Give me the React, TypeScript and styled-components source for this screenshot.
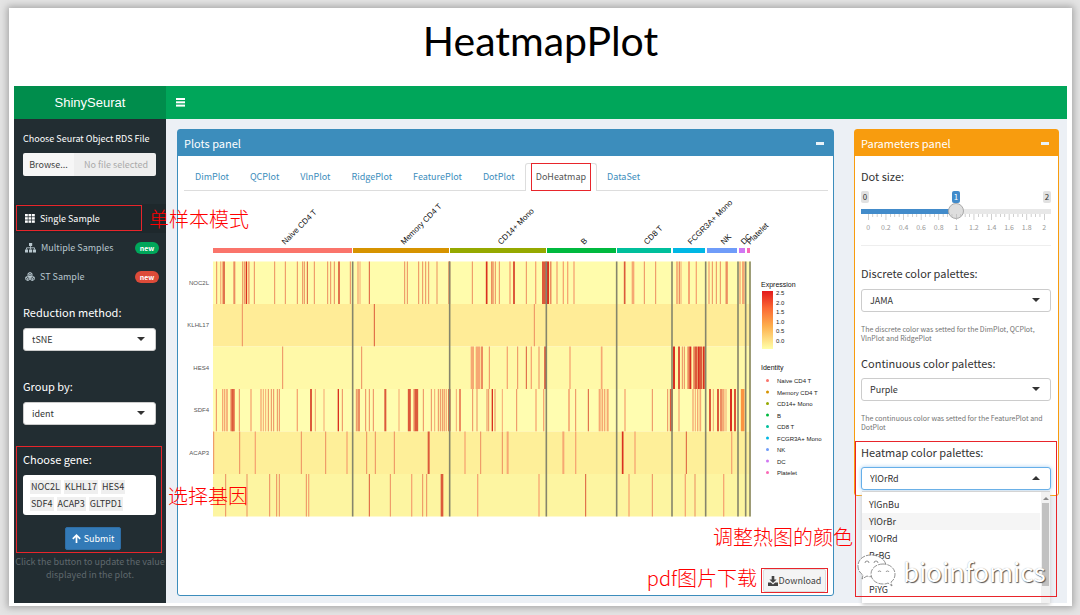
import React, { useState } from "react";
import styled, { createGlobalStyle, css } from "styled-components";

const uiFont = '"Noto Sans CJK SC", "Noto Sans", sans-serif';
const plotFont = '"Liberation Sans", Arial, sans-serif';

const GlobalStyle = createGlobalStyle`
  * { box-sizing: border-box; }
  body {
    margin: 0;
    background: #e4e4e4;
    font-family: ${uiFont};
    color: #333;
  }
  button, input, select { font-family: inherit; }
`;

const Slide = styled.main`
  margin: 8px 8px 9px 9px;
  padding: 0 5px 3px;
  background: #fff;
  box-shadow: 0 0 7px 2px #a8a8a8;
`;

const SlideTitle = styled.h1`
  margin: 0;
  height: 78px;
  padding-top: 4px;
  font: 400 41px/58px Lato, sans-serif;
  text-align: center;
  color: #000;
`;

const Shell = styled.div`
  display: grid;
  grid-template-columns: 152px minmax(0, 1fr);
  grid-template-rows: 33px auto;
`;

const Brand = styled.div`
  background: #008d4c;
  color: #fff;
  font: 400 13px/33px ${plotFont};
  text-align: center;
`;

const Navbar = styled.header`
  display: flex;
  align-items: center;
  padding-left: 10px;
  background: #00a65a;
`;

const MenuButton = styled.button`
  display: flex;
  padding: 0;
  border: 0;
  background: none;
  color: #fff;
`;

const Sidebar = styled.aside`
  position: relative;
  z-index: 2;
  padding: 10px 0 0;
  background: #222d32;
  color: #fff;
`;

const Field = styled.div<{ $space?: number }>`
  position: relative;
  padding: 0 10px 0 9px;
  margin-top: ${(p) => p.$space ?? 0}px;
`;

const Label = styled.label<{ $small?: boolean }>`
  display: block;
  font-size: ${(p) => (p.$small ? 9 : 11)}px;
  line-height: 20px;
  white-space: nowrap;
`;

const FileRow = styled.div`
  display: flex;
  height: 23px;
  margin-top: 4px;
  border-radius: 2px;
  overflow: hidden;
`;

const BrowseLabel = styled.label`
  width: 51px;
  background: #f6f6f6;
  color: #444;
  font-size: 9px;
  line-height: 23px;
  text-align: center;
`;

const HiddenFile = styled.input`
  position: absolute;
  width: 1px;
  height: 1px;
  opacity: 0;
`;

const FileName = styled.input`
  flex: 1;
  min-width: 0;
  padding: 0 0 0 10px;
  border: 0;
  background: #eee;
  font-size: 9px;
  &::placeholder { color: #aaa; }
`;

const Menu = styled.nav`
  margin-top: 28px;
`;

const MenuItem = styled.a<{ $active?: boolean }>`
  position: relative;
  display: flex;
  align-items: center;
  gap: 5px;
  height: 29px;
  padding: 0 7px 0 11px;
  background: ${(p) => (p.$active ? "#1e282c" : "transparent")};
  color: ${(p) => (p.$active ? "#fff" : "#b8c7ce")};
  font-size: 9px;
  text-decoration: none;
  white-space: nowrap;
`;

const NewBadge = styled.span<{ $color: string }>`
  margin-left: auto;
  width: 24px;
  border-radius: 6px;
  background: ${(p) => p.$color};
  color: #fff;
  font-size: 7px;
  font-weight: 700;
  line-height: 12px;
  text-align: center;
`;

const Mark = styled.span<{ $inset: string }>`
  position: absolute;
  inset: ${(p) => p.$inset};
  border: 1px solid #e8252b;
  pointer-events: none;
  z-index: 4;
`;

const Note = styled.span`
  position: absolute;
  z-index: 5;
  color: #f00;
  font-size: 20px;
  font-weight: 300;
  line-height: 24px;
  white-space: nowrap;
`;

const SideNote = styled(Note)`
  left: 135px;
  top: 3px;
`;

const GeneNote = styled(Note)`
  left: 154px;
  top: 35px;
`;

const SelectWrap = styled.div<{ $tight?: boolean }>`
  position: relative;
  margin-top: ${(p) => (p.$tight ? 5 : 6)}px;
  color: #333;
`;

const Select = styled.select<{ $open?: boolean }>`
  display: block;
  width: 100%;
  height: 23px;
  padding: 0 20px 0 8px;
  border: 1px solid #ccc;
  border-radius: 3px;
  appearance: none;
  background: #fff;
  color: #333;
  font-size: 9px;
  ${(p) =>
    p.$open &&
    css`
      border-color: #66afe9;
      box-shadow: 0 0 4px #a5cff2;
    `}
`;

const Caret = styled.span<{ $up?: boolean }>`
  position: absolute;
  right: 11px;
  top: 9px;
  border: 4px solid transparent;
  border-top-color: ${(p) => (p.$up ? "transparent" : "#333")};
  border-bottom-color: ${(p) => (p.$up ? "#333" : "transparent")};
  border-top-width: ${(p) => (p.$up ? 0 : 4)}px;
  border-bottom-width: ${(p) => (p.$up ? 4 : 0)}px;
  pointer-events: none;
`;

const GeneBox = styled.div`
  display: flex;
  flex-wrap: wrap;
  align-content: center;
  gap: 3px;
  height: 40px;
  margin-top: 6px;
  padding: 0 7px;
  border-radius: 3px;
  background: #fff;
`;

const Gene = styled.span`
  padding: 0 1px;
  background: #efefef;
  color: #333;
  font-size: 9px;
  line-height: 14px;
`;

const SubmitButton = styled.button`
  display: flex;
  align-items: center;
  justify-content: center;
  gap: 3px;
  width: 56px;
  height: 23px;
  margin: 12px auto 0 42px;
  padding: 0;
  border: 1px solid #2e6da4;
  border-radius: 2px;
  background: #337ab7;
  color: #fff;
  font-size: 9px;
`;

const SideHelp = styled.p`
  margin: 5px 0 0;
  color: #5f686d;
  font-size: 9px;
  line-height: 13px;
  text-align: center;
`;

const Content = styled.section`
  display: grid;
  grid-template-columns: minmax(0, 657fr) minmax(0, 205fr);
  gap: 20px;
  align-items: start;
  padding: 10px 8px 7px 11px;
  background: #ecf0f5;
`;

const Panel = styled.section<{ $color: string }>`
  position: relative;
  border: 1px solid ${(p) => p.$color};
  border-radius: 3px;
  background: #fff;
`;

const PanelHead = styled.header<{ $color: string }>`
  display: flex;
  align-items: center;
  justify-content: space-between;
  height: 26px;
  padding: 0 9px 0 6px;
  background: ${(p) => p.$color};
  color: #fff;
`;

const PanelTitle = styled.h2`
  margin: 0;
  font-size: 11px;
  font-weight: 400;
  line-height: 24px;
`;

const CollapseButton = styled.button`
  width: 8px;
  height: 3px;
  padding: 0;
  border: 0;
  background: #e8f2f8;
`;

const Tabs = styled.nav`
  display: flex;
  height: 35px;
  margin: 0 5px 0 6px;
  padding-top: 7px;
  border-bottom: 1px solid #ddd;
`;

const Tab = styled.a<{ $active?: boolean }>`
  position: relative;
  height: 28px;
  margin-right: -1px;
  padding: 0 10px;
  border: 1px solid ${(p) => (p.$active ? "#ddd" : "transparent")};
  border-bottom: 0;
  border-radius: 3px 3px 0 0;
  background: ${(p) => (p.$active ? "#fff" : "none")};
  color: ${(p) => (p.$active ? "#555" : "#3c8dbc")};
  font-size: 9px;
  line-height: 26px;
  text-decoration: none;
`;

const Chart = styled.svg`
  display: block;
  width: 100%;
  height: auto;
  font-family: ${plotFont};
`;

const PanelFoot = styled.footer`
  position: relative;
  display: flex;
  justify-content: flex-end;
  padding: 5px 5px 2px 0;
`;

const DownloadSlot = styled.div`
  position: relative;
  padding: 1px 2px;
`;

const DownloadButton = styled.button`
  display: flex;
  align-items: center;
  justify-content: center;
  gap: 1px;
  width: 63px;
  height: 23px;
  padding: 0;
  border: 1px solid #ddd;
  border-radius: 2px;
  background: #f4f4f4;
  color: #444;
  font-size: 9px;
`;

const DownloadNote = styled(Note)`
  right: 76px;
  top: 3px;
`;

const ColorNote = styled(Note)`
  right: -20px;
  top: -38px;
`;

const ParamBody = styled.div`
  padding: 10px 7px 5px 6px;
`;

const SliderTop = styled.div`
  display: flex;
  justify-content: space-between;
  margin-top: 5px;
`;

const SliderTag = styled.output<{ $on?: boolean }>`
  width: 8px;
  border-radius: 2px;
  background: ${(p) => (p.$on ? "#428bca" : "#e1e1e1")};
  color: ${(p) => (p.$on ? "#fff" : "#333")};
  font-size: 8px;
  line-height: 12px;
  text-align: center;
`;

const Range = styled.input`
  display: block;
  width: 100%;
  height: 16px;
  margin: 0;
  appearance: none;
  background: linear-gradient(90deg, #428bca 50%, #e8e8e8 50%) center / 100% 5px no-repeat;
  &::-webkit-slider-thumb {
    appearance: none;
    width: 16px;
    height: 16px;
    border: 1px solid #aaa;
    border-radius: 50%;
    background: #dedede;
  }
`;

const Scale = styled.svg`
  display: block;
  width: 100%;
  height: auto;
  margin-top: -5px;
  font-family: ${uiFont};
`;

const Rule = styled.hr`
  height: 1px;
  margin: 11px 0 17px;
  border: 0;
  background: #eee;
`;

const ParamHelp = styled.p`
  margin: 13px 0 0;
  min-height: 18px;
  color: #737373;
  font-size: 7px;
  line-height: 9px;
`;

const ParamLabel = styled(Label)<{ $gap?: number }>`
  margin-top: ${(p) => p.$gap ?? 0}px;
`;

const HeatmapField = styled.div`
  position: relative;
  margin-top: 10px;
`;

const Options = styled.ul`
  position: absolute;
  top: 49px;
  left: 1px;
  right: 1px;
  height: 112px;
  margin: 0;
  padding: 4px 10px 0 0;
  overflow: hidden;
  background: #fff;
  border: solid #d4d4d4;
  border-width: 1px 0 0;
  box-shadow: 0 2px 4px #ccc;
  list-style: none;
`;

const Option = styled.li<{ $hover?: boolean }>`
  height: 17px;
  padding-left: 7px;
  background: ${(p) => (p.$hover ? "#f5f5f5" : "#fff")};
  color: #333;
  font-size: 9px;
  line-height: 17px;
`;

const ScrollTrack = styled.li`
  position: absolute;
  top: 0;
  right: 0;
  width: 9px;
  height: 112px;
  padding: 11px 1px 0;
  background: #f1f1f1;
  &::before {
    content: "";
    position: absolute;
    top: 5px;
    left: 2px;
    border: 3px solid transparent;
    border-top-width: 0;
    border-bottom-color: #888;
  }
  &::after {
    content: "";
    display: block;
    height: 83px;
    background: #c1c1c1;
  }
`;

const Watermark = styled.div`
  position: absolute;
  z-index: 6;
  left: 2px;
  bottom: -94px;
  display: flex;
  align-items: center;
  gap: 7px;
  color: #fff;
  font-size: 26px;
  line-height: 36px;
  text-shadow: 1px 1px 1px #555, 0 0 1px #aaa;
`;

/* Cell positions are thirds of a plot unit, counted from PLOT_ORIGIN. */
const PLOT_ORIGIN = 180;
type Cell = [x: number, width?: number, tone?: number];
const tones = ["#f6a873", "#ec8d60", "#dc5a3b", "#d9301f", "#fb9441"];

const rows: { gene: string; fill: string; cells: Cell[] }[] = [
  {
    gene: "NOC2L",
    fill: "#fffcac",
    cells: [
      [110, 3], [122, 3, 0], [127, 3, 0], [132, 5, 2], [163, 6, 1], [188], [193], [199, 4, 3], [206, 6, 0], [223],
      [284], [316], [352], [368], [373], [382, 3, 2], [403], [443], [452], [463], [477, 5, 2], [511], [534, 4, 0],
      [540, 3, 0], [568, 3, 2], [674], [682], [716], [728], [737], [746], [771], [808, 5, 2], [877], [920, 5, 3],
      [935, 4, 1], [939, 4, 1], [946], [958], [990, 4, 0], [1002, 6, 2], [1039], [1067, 4, 0], [1093, 14, 2],
      [1104, 6, 3], [1112, 5, 1], [1131, 4, 0], [1150, 4, 0], [1163, 4, 0], [1182, 4, 0], [1334, 5, 2],
      [1359, 8, 0], [1393], [1427], [1491, 5, 0], [1498, 4, 1], [1503, 3, 0], [1527, 6, 0], [1549, 4, 0],
      [1587, 4, 0], [1597], [1609], [1621], [1640, 7, 1], [1680, 4, 0], [1690, 8, 0],
    ],
  },
  { gene: "KLHL17", fill: "#ffec97", cells: [[187], [583, 3, 2], [1063]] },
  {
    gene: "HES4",
    fill: "#fff9a8",
    cells: [
      [308], [545], [877, 10, 0], [894, 14, 0], [906, 6, 1], [928], [982, 4, 0], [1013], [1039, 3, 2], [1054, 4, 0],
      [1077], [1096, 7, 2], [1170, 4, 0], [1265, 5, 0], [1482, 6, 3], [1497, 5, 3], [1507], [1513], [1525, 6, 1],
      [1531, 6, 3], [1541], [1547, 8, 2], [1556, 7, 3], [1563, 6, 2], [1571, 6, 3], [1576, 4, 2],
    ],
  },
  {
    gene: "SDF4",
    fill: "#fffdb0",
    cells: [
      [109], [128, 4, 0], [134, 4, 0], [141, 5, 0], [158, 14, 1], [158, 6, 2], [178], [213, 4, 0], [243, 4, 0],
      [250, 3, 0], [257, 3, 0], [265], [274], [281], [292], [298], [352, 4, 0], [393, 6, 2], [406, 3, 0],
      [432, 3, 0], [475, 4, 3], [487], [529], [536, 8, 1], [557], [568], [580], [616, 6, 2], [657, 3, 0],
      [688, 9, 2], [702, 5, 0], [709, 11, 2], [730], [754], [764, 3, 0], [775], [781], [787], [793, 5, 0],
      [799, 3, 0], [808, 7, 2], [829, 3, 0], [840, 6, 1], [878], [891], [921], [926], [937, 4, 3],
      [945], [967, 3, 0], [1010], [1068, 4, 0], [1091, 4, 0], [1167, 5, 0], [1187], [1225, 3, 2], [1259, 6, 0],
      [1267, 5, 0], [1274, 4, 0], [1283, 6, 0], [1335, 4, 0], [1417], [1463], [1474, 9, 2], [1497, 4, 0],
      [1539, 4, 0], [1546, 3, 0], [1553, 4, 0], [1561, 5, 0], [1590, 6, 2], [1600, 3, 0], [1614, 6, 2],
      [1624, 8, 1], [1631, 5, 0], [1638, 3, 0], [1653, 6, 3], [1665, 5, 3], [1688, 11, 4],
    ],
  },
  {
    gene: "ACAP3",
    fill: "#feef99",
    cells: [
      [101], [179], [226, 4, 0], [364], [437], [501, 4, 0], [560], [586], [643], [746, 6, 2], [855, 4, 0],
      [902], [967], [983, 6, 0], [1150, 6, 0], [1187, 4, 0], [1328, 5, 3], [1365, 4, 0], [1519, 3, 2], [1655, 4, 0],
    ],
  },
  {
    gene: "",
    fill: "#fdf5a1",
    cells: [
      [137], [201], [269], [290], [298], [379], [386, 4, 0], [568, 3, 2], [631], [695, 4, 0], [728], [740],
      [786, 8, 2], [893, 4, 0], [1077, 4, 0], [1217, 3, 2], [1347, 4, 0], [1417], [1516, 4, 0], [1545],
      [1631, 4, 0],
    ],
  },
];

const dividers = [518, 809, 1099, 1310, 1476, 1577, 1674, 1697, 1710];

const groups = [
  { name: "Naive CD4 T", color: "#fa746b", from: 213, to: 352, label: 285 },
  { name: "Memory CD4 T", color: "#d69300", from: 353, to: 449, label: 404 },
  { name: "CD14+ Mono", color: "#95a900", from: 450, to: 546, label: 501 },
  { name: "B", color: "#00b93f", from: 547, to: 616, label: 584 },
  { name: "CD8 T", color: "#00bf9c", from: 617, to: 671, label: 647 },
  { name: "FCGR3A+ Mono", color: "#00b7e4", from: 673, to: 705, label: 691 },
  { name: "NK", color: "#6f9cf9", from: 707, to: 737, label: 724 },
  { name: "DC", color: "#d077f2", from: 739, to: 745, label: 744 },
  { name: "Platelet", color: "#fb68b6", from: 747, to: 750, label: 750 },
];

const rowTop = (index: number) => 261.5 + index * 42.5;

const Heatmap = () => (
  <Chart viewBox="178 191 655 372" role="img" aria-label="Expression heatmap by identity">
    <defs>
      <linearGradient id="expression" x1="0" y1="0" x2="0" y2="1">
        <stop offset="0" stopColor="#e31a1c" />
        <stop offset="0.3" stopColor="#fb6a34" />
        <stop offset="0.6" stopColor="#fdae4c" />
        <stop offset="1" stopColor="#ffffa8" />
      </linearGradient>
    </defs>
    {groups.map((g) => (
      <g key={g.name}>
        <rect x={g.from} y={248} width={g.to - g.from} height={5} fill={g.color} />
        <text transform={`translate(${g.label} 245) rotate(-45)`} fontSize={8} fill="#111">
          {g.name}
        </text>
      </g>
    ))}
    {rows.map((row, i) => (
      <g key={i}>
        <rect x={213} y={rowTop(i)} width={538} height={42.5} fill={row.fill} />
        {row.cells.map(([x, width = 3, tone = 1], n) => (
          <rect
            key={n}
            x={PLOT_ORIGIN + (x - width / 2) / 3}
            y={rowTop(i)}
            width={width / 3}
            height={42.5}
            fill={tones[tone]}
          />
        ))}
        <text x={209} y={rowTop(i) + 23} fontSize={6} fill="#555" textAnchor="end">
          {row.gene}
        </text>
      </g>
    ))}
    {dividers.map((x) => (
      <rect key={x} x={PLOT_ORIGIN + x / 3 - 0.8} y={261.5} width={1.6} height={255} fill="#85856c" />
    ))}
    <text x={761} y={287} fontSize={7} fill="#111">Expression</text>
    <rect x={762} y={291} width={11} height={58} fill="url(#expression)" />
    {["2.5", "2.0", "1.5", "1.0", "0.5", "0.0"].map((value, i) => (
      <text key={value} x={776} y={295 + i * 9.6} fontSize={6} fill="#222">{value}</text>
    ))}
    <text x={761} y={370} fontSize={7} fill="#111">Identity</text>
    {groups.map((g, i) => (
      <g key={g.name}>
        <circle cx={767.5} cy={380.5 + i * 11.5} r={1.5} fill={g.color} />
        <text x={777} y={383 + i * 11.5} fontSize={6} fill="#222">{g.name}</text>
      </g>
    ))}
  </Chart>
);

const GridIcon = () => (
  <svg width="10" height="9" viewBox="0 0 10 9" fill="currentColor" aria-hidden="true">
    {[0, 3.5, 7].map((x) => [0, 3.2, 6.4].map((y) => <rect key={`${x}-${y}`} x={x} y={y} width="2.8" height="2.4" />))}
  </svg>
);

const TreeIcon = () => (
  <svg width="11" height="10" viewBox="0 0 11 10" fill="currentColor" aria-hidden="true">
    <rect x="4" y="0" width="3.2" height="3" />
    <rect x="0" y="6.5" width="3" height="3" />
    <rect x="4" y="6.5" width="3.2" height="3" />
    <rect x="8" y="6.5" width="3" height="3" />
    <path d="M1.5 6.5V4.8H9.5V6.5M5.6 3V6.5" fill="none" stroke="currentColor" strokeWidth="0.9" />
  </svg>
);

const CubesIcon = () => (
  <svg width="10" height="9" viewBox="0 0 20 18" fill="none" stroke="currentColor" strokeWidth="2" strokeLinejoin="round" aria-hidden="true">
    <path d="M10 1l4 2v4.500l-4 2-4-2V3zM6 3l4 2 4-2M10 5v4" />
    <path d="M5.500 8.500l4 2V15l-4 2-4-2v-4.500zM1.500 10.500l4 2 4-2M5.500 12.500V17" />
    <path d="M14.500 8.500l4 2V15l-4 2-4-2v-4.500zM10.500 10.500l4 2 4-2M14.500 12.500V17" />
  </svg>
);

const BarsIcon = () => (
  <svg width="9" height="9" viewBox="0 0 9 9" fill="currentColor" aria-hidden="true">
    <rect width="9" height="2" y="0" />
    <rect width="9" height="2" y="3.300" />
    <rect width="9" height="2" y="6.600" />
  </svg>
);

const ArrowUpIcon = () => (
  <svg width="9" height="9" viewBox="0 0 9 9" fill="none" stroke="currentColor" strokeWidth="1.700" aria-hidden="true">
    <path d="M4.500 9V1.200M0.800 4.900L4.500 1.200 8.200 4.900" />
  </svg>
);

const DownloadIcon = () => (
  <svg width="10" height="10" viewBox="0 0 10 10" fill="currentColor" aria-hidden="true">
    <path d="M3.700 0h2.600v3.400h2.300L5 7 1.400 3.400h2.300z" />
    <path d="M0 6.500h2.800L5 8.400l2.200-1.900H10V10H0z" />
  </svg>
);

const ChatIcon = () => (
  <svg width="39" height="34" viewBox="0 0 39 34" fill="#fff" stroke="#777" strokeWidth="0.8" aria-hidden="true">
    <path d="M14 1C6 1 1 6 1 12c0 4 2 7 5 9l-1 4 5-3c2 1 5 1 7 0 8 0 12-5 12-10C29 6 22 1 14 1z" strokeDasharray="5 1" />
    <path d="M26 10c-7 0-12 4.500-12 10s5 10 12 10c2 0 3 0 5-1l4 3-1-4c3-2 4-5 4-8 0-5.500-5-10-12-10z" strokeDasharray="5 1" />
    <g fill="none" stroke="#777">
      <path d="M8 9a2 2 0 0 1 4 0M17 9a2 2 0 0 1 4 0M21 18a1.600 1.600 0 0 1 3 0M29 18a1.600 1.600 0 0 1 3 0" />
    </g>
  </svg>
);

const SliderScale = () => (
  <Scale viewBox="0 0 190 20" aria-hidden="true">
    {Array.from({ length: 41 }, (_, i) => (
      <rect key={i} x={7 + i * 4.4} y={0} width={0.7} height={i % 4 === 0 ? 6 : 3} fill="#bbb" />
    ))}
    {["0", "0.2", "0.4", "0.6", "0.8", "1", "1.2", "1.4", "1.6", "1.8", "2"].map((v, i) => (
      <text key={v} x={7.300 + i * 17.600} y={16} fontSize={7} fill="#999" textAnchor="middle">{v}</text>
    ))}
  </Scale>
);

const tabs = ["DimPlot", "QCPlot", "VlnPlot", "RidgePlot", "FeaturePlot", "DotPlot", "DoHeatmap", "DataSet"];
const genes = ["NOC2L", "KLHL17", "HES4", "SDF4", "ACAP3", "GLTPD1"];
const palettes = ["YlGnBu", "YlOrBr", "YlOrRd", "BrBG", "PRGn", "PiYG"];

const Picker = ({ id, value, open, tight }: { id: string; value: string; open?: boolean; tight?: boolean }) => (
  <SelectWrap $tight={tight}>
    <Select id={id} $open={open} defaultValue={value}>
      <option>{value}</option>
    </Select>
    <Caret $up={open} />
  </SelectWrap>
);

export default function App() {
  const [size, setSize] = useState(1);
  return (
    <>
      <GlobalStyle />
      <Slide>
        <SlideTitle>HeatmapPlot</SlideTitle>
        <Shell>
          <Brand>ShinySeurat</Brand>
          <Navbar>
            <MenuButton aria-label="Toggle navigation"><BarsIcon /></MenuButton>
          </Navbar>
          <Sidebar>
            <Field>
              <Label $small htmlFor="rds-name">Choose Seurat Object RDS File</Label>
              <FileRow>
                <BrowseLabel>Browse...<HiddenFile type="file" /></BrowseLabel>
                <FileName id="rds-name" readOnly placeholder="No file selected" />
              </FileRow>
            </Field>
            <Menu>
              <MenuItem href="#single" $active>
                <GridIcon />Single Sample
                <Mark $inset="1px 24px 2px 2px" />
                <SideNote>单样本模式</SideNote>
              </MenuItem>
              <MenuItem href="#multiple">
                <TreeIcon />Multiple Samples<NewBadge $color="#00a65a">new</NewBadge>
              </MenuItem>
              <MenuItem href="#st">
                <CubesIcon />ST Sample<NewBadge $color="#dd4b39">new</NewBadge>
              </MenuItem>
            </Menu>
            <Field $space={11}>
              <Label htmlFor="reduction">Reduction method:</Label>
              <Picker id="reduction" value="tSNE" />
            </Field>
            <Field $space={25}>
              <Label htmlFor="group">Group by:</Label>
              <Picker id="group" value="ident" />
            </Field>
            <Field $space={24}>
              <Mark $inset="-3px 4px -3px 2px" />
              <GeneNote>选择基因</GeneNote>
              <Label as="div">Choose gene:</Label>
              <GeneBox>
                {genes.map((g) => <Gene key={g}>{g}</Gene>)}
              </GeneBox>
              <SubmitButton><ArrowUpIcon />Submit</SubmitButton>
            </Field>
            <SideHelp>Click the button to update the value displayed in the plot.</SideHelp>
          </Sidebar>
          <Content>
            <Panel $color="#3c8dbc">
              <PanelHead $color="#3c8dbc">
                <PanelTitle>Plots panel</PanelTitle>
                <CollapseButton aria-label="Collapse plots panel" />
              </PanelHead>
              <Tabs>
                {tabs.map((t) => (
                  <Tab key={t} href={`#${t}`} $active={t === "DoHeatmap"}>
                    {t}
                    {t === "DoHeatmap" && <Mark $inset="-1px 5px 0 5px" />}
                  </Tab>
                ))}
              </Tabs>
              <Heatmap />
              <PanelFoot>
                <ColorNote>调整热图的颜色</ColorNote>
                <DownloadNote>pdf图片下载</DownloadNote>
                <DownloadSlot>
                  <DownloadButton><DownloadIcon />Download</DownloadButton>
                  <Mark $inset="0" />
                </DownloadSlot>
              </PanelFoot>
            </Panel>
            <Panel $color="#f89c0e">
              <PanelHead $color="#f89c0e">
                <PanelTitle>Parameters panel</PanelTitle>
                <CollapseButton aria-label="Collapse parameters panel" />
              </PanelHead>
              <ParamBody>
                <Label htmlFor="dot-size">Dot size:</Label>
                <SliderTop>
                  <SliderTag>0</SliderTag>
                  <SliderTag $on>{size}</SliderTag>
                  <SliderTag>2</SliderTag>
                </SliderTop>
                <Range
                  id="dot-size"
                  type="range"
                  min="0"
                  max="2"
                  step="0.1"
                  value={size}
                  onChange={(e) => setSize(Number(e.target.value))}
                />
                <SliderScale />
                <Rule />
                <ParamLabel htmlFor="discrete">Discrete color palettes:</ParamLabel>
                <Picker id="discrete" value="JAMA" />
                <ParamHelp>The discrete color was setted for the DimPlot, QCPlot, VlnPlot and RidgePlot</ParamHelp>
                <ParamLabel $gap={10} htmlFor="continuous">Continuous color palettes:</ParamLabel>
                <Picker id="continuous" value="Purple" tight />
                <ParamHelp>The continuous color was setted for the FeaturePlot and DotPlot</ParamHelp>
                <HeatmapField>
                  <Label htmlFor="heatmap">Heatmap color palettes:</Label>
                  <Picker id="heatmap" value="YlOrRd" open tight />
                  <Options role="listbox" aria-label="Heatmap color palettes">
                    {palettes.map((p) => (
                      <Option key={p} role="option" $hover={p === "YlOrBr"}>{p}</Option>
                    ))}
                    <ScrollTrack role="presentation" />
                  </Options>
                  <Mark $inset="-1px -6px -107px -6px" />
                </HeatmapField>
              </ParamBody>
              <Watermark><ChatIcon />bioinfomics</Watermark>
            </Panel>
          </Content>
        </Shell>
      </Slide>
    </>
  );
}
